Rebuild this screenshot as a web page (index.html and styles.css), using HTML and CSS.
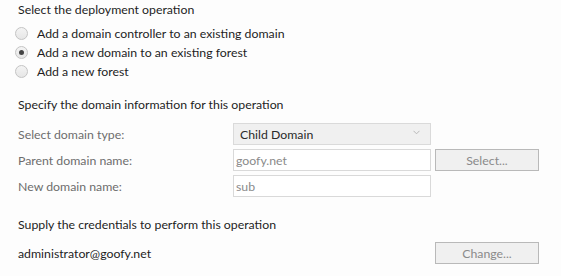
FILE: index.html
```html
<!DOCTYPE html>
<html lang="en">
<head>
    <meta charset="UTF-8">
    <title>Deployment Configuration</title>
    <link rel="stylesheet" href="styles.css">
</head>
<body>
    <div class="page">
        <div class="heading">Select the deployment operation</div>

        <div class="options">
            <label class="option">
                <span class="radio"></span>
                <span>Add a domain controller to an existing domain</span>
            </label>
            <label class="option">
                <span class="radio checked"></span>
                <span>Add a new domain to an existing forest</span>
            </label>
            <label class="option">
                <span class="radio"></span>
                <span>Add a new forest</span>
            </label>
        </div>

        <div class="heading section">Specify the domain information for this operation</div>

        <div class="form">
            <div class="label">Select domain type:</div>
            <div class="combo">
                <span>Child Domain</span>
                <svg class="chevron" width="7" height="5" viewBox="0 0 7 5">
                    <path d="M0.5 0.8 L3.5 3.8 L6.5 0.8" fill="none" stroke="#b8b8b8" stroke-width="1"/>
                </svg>
            </div>
            <div></div>

            <div class="label">Parent domain name:</div>
            <div class="textbox">goofy.net</div>
            <div class="button">Select...</div>

            <div class="label">New domain name:</div>
            <div class="textbox">sub</div>
            <div></div>
        </div>

        <div class="heading creds-title">Supply the credentials to perform this operation</div>

        <div class="creds">
            <div class="user">administrator@goofy.net</div>
            <div class="button">Change...</div>
        </div>
    </div>
</body>
</html>
```

FILE: styles.css
```css
body {
    margin: 0;
    background: #fdfdfd;
    font-family: 'Lato', 'Noto Sans', sans-serif;
    font-size: 12.3px;
    color: #1e1e1e;
}

.page {
    width: 521px;
    padding-left: 18px;
}

.heading {
    line-height: 20px;
}

.options {
    margin-top: 4px;
}

.option {
    display: flex;
    align-items: center;
    height: 19px;
    margin-left: -3px;
}

.radio {
    box-sizing: border-box;
    width: 13px;
    height: 13px;
    border-radius: 50%;
    border: 1px solid #c4c4c4;
    background: linear-gradient(#f4f4f4, #e6e6e6);
    margin-right: 9px;
    display: flex;
    align-items: center;
    justify-content: center;
}

.radio.checked::after {
    content: "";
    width: 5px;
    height: 5px;
    border-radius: 50%;
    background: #444;
}

.section {
    margin-top: 14px;
}

.form {
    display: grid;
    grid-template-columns: 211px 198px 104px;
    grid-auto-rows: 22px;
    column-gap: 4px;
    row-gap: 4px;
    margin-top: 8px;
}

.label {
    color: #6d6d6d;
    display: flex;
    align-items: center;
}

.combo {
    box-sizing: border-box;
    background: #f0f0f0;
    border: 1px solid #dadada;
    display: flex;
    align-items: center;
    justify-content: space-between;
    padding: 0 10px 0 6px;
    color: #2a2a2a;
}

.chevron {
    margin-top: -3px;
}

.textbox {
    box-sizing: border-box;
    background: #fff;
    border: 1px solid #d9d9d9;
    color: #8a8a8a;
    display: flex;
    align-items: center;
    padding-left: 2px;
}

.button {
    box-sizing: border-box;
    background: #f0f0f0;
    border: 1px solid #b9b9b9;
    color: #8a8a8a;
    display: flex;
    align-items: center;
    justify-content: center;
}

.creds-title {
    margin-top: 18px;
}

.creds {
    display: grid;
    grid-template-columns: 417px 104px;
    grid-auto-rows: 22px;
    margin-top: 7px;
}

.user {
    display: flex;
    align-items: center;
}
```
